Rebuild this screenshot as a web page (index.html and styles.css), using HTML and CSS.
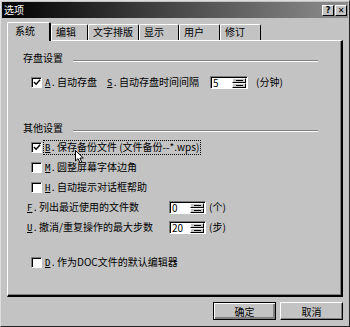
FILE: index.html
```html
<!DOCTYPE html>
<html lang="zh-CN">
<head>
    <meta charset="UTF-8">
    <title>选项</title>
    <link rel="stylesheet" href="styles.css">
</head>
<body>
    <div class="dialog">
        <div class="titlebar">
            <span class="title">选项</span>
            <div class="title-btns">
                <span class="tbtn">?</span>
                <span class="tbtn">✕</span>
            </div>
        </div>

        <div class="tabs">
            <div class="tab active">系统</div>
            <div class="tab">编辑</div>
            <div class="tab">文字排版</div>
            <div class="tab">显示</div>
            <div class="tab">用户</div>
            <div class="tab">修订</div>
        </div>

        <div class="panel">
            <!-- 存盘设置 -->
            <div class="group-head">
                <span>存盘设置</span>
                <i class="rule"></i>
            </div>
            <div class="row row-save">
                <span class="check on"><svg width="9" height="9" viewBox="0 0 9 9"><path d="M1 4 L3.5 6.5 L8 1.5" fill="none" stroke="#000" stroke-width="1.6"/></svg></span>
                <span class="label"><span class="key"><u>A</u>.</span>自动存盘</span>
                <span class="label label-gap"><span class="key"><u>S</u>.</span>自动存盘时间间隔</span>
                <span class="spin spin-wide">
                    <span class="spin-val">5</span>
                    <span class="spin-btns"><b class="arrow up"></b><b class="arrow down"></b></span>
                </span>
                <span class="unit unit-wide">(分钟)</span>
            </div>

            <!-- 其他设置 -->
            <div class="group-head group-other">
                <span>其他设置</span>
                <i class="rule"></i>
            </div>
            <div class="row row-first">
                <span class="check on"><svg width="9" height="9" viewBox="0 0 9 9"><path d="M1 4 L3.5 6.5 L8 1.5" fill="none" stroke="#000" stroke-width="1.6"/></svg></span>
                <span class="label focus"><span class="key"><u>B</u>.</span>保存备份文件 (文件备份--*.wps)</span>
            </div>
            <div class="row">
                <span class="check"></span>
                <span class="label"><span class="key"><u>M</u>.</span>圆整屏幕字体边角</span>
            </div>
            <div class="row">
                <span class="check"></span>
                <span class="label"><span class="key"><u>H</u>.</span>自动提示对话框帮助</span>
            </div>
            <div class="row row-field">
                <span class="field-label"><span class="key"><u>F</u>.</span>列出最近使用的文件数</span>
                <span class="spin">
                    <span class="spin-val">0</span>
                    <span class="spin-btns"><b class="arrow up"></b><b class="arrow down"></b></span>
                </span>
                <span class="unit">(个)</span>
            </div>
            <div class="row row-field">
                <span class="field-label"><span class="key"><u>U</u>.</span>撤消/重复操作的最大步数</span>
                <span class="spin">
                    <span class="spin-val">20</span>
                    <span class="spin-btns"><b class="arrow up"></b><b class="arrow down"></b></span>
                </span>
                <span class="unit">(步)</span>
            </div>
            <div class="row row-last">
                <span class="check"></span>
                <span class="label"><span class="key"><u>D</u>.</span>作为DOC文件的默认编辑器</span>
            </div>
        </div>

        <div class="footer">
            <button class="btn btn-default">确定</button>
            <button class="btn">取消</button>
        </div>

        <!-- mouse pointer over the backup option -->
        <svg class="cursor" width="10" height="14" viewBox="0 0 10 14">
            <path d="M0.5 0.5 L0.5 11 L3 8.6 L5 12.8 L6.8 12 L4.9 8 L8.3 8 Z" fill="#fff" stroke="#000" stroke-width="1"/>
        </svg>
    </div>
</body>
</html>
```

FILE: styles.css
```css
:root {
    --face: #c3c3c3;
    --shadow: #808080;
    --light: #ffffff;
    --dark: #000000;
}

* {
    box-sizing: border-box;
    margin: 0;
    padding: 0;
}

body {
    width: 350px;
    height: 327px;
    background: var(--face);
    font-family: "Noto Sans CJK SC", "DejaVu Sans", sans-serif;
    font-size: 10px;
    line-height: 12px;
    color: #000;
}

/* Dialog frame */
.dialog {
    position: relative;
    width: 350px;
    height: 327px;
    border: 1px solid;
    border-color: #dedede #222 #222 #dedede;
    padding: 1px;
    display: flex;
    flex-direction: column;
}

.titlebar {
    height: 16px;
    background: linear-gradient(to right, #000 0%, #3a3a3a 40%, #8e8e8e 100%);
    color: #fff;
    display: flex;
    align-items: center;
    justify-content: space-between;
    padding: 0 1px 0 2px;
}

.title {
    font-size: 10px;
}

.title-btns {
    display: flex;
    gap: 1px;
}

.tbtn {
    width: 12px;
    height: 11px;
    background: var(--face);
    color: #000;
    border: 1px solid;
    border-color: var(--light) var(--dark) var(--dark) var(--light);
    font-family: "DejaVu Sans", sans-serif;
    font-weight: bold;
    font-size: 8px;
    line-height: 9px;
    text-align: center;
}

/* Tabs */
.tabs {
    display: flex;
    align-items: flex-end;
    height: 18px;
    margin: 4px 5px 0;
}

.tab {
    height: 16px;
    padding-left: 4px;
    border-top: 1px solid var(--light);
    border-left: 1px solid var(--light);
    border-right: 1px solid var(--dark);
    border-radius: 2px 2px 0 0;
    line-height: 14px;
}

.tab:nth-child(2) { width: 37px; }
.tab:nth-child(3) { width: 51px; }
.tab:nth-child(4) { width: 40px; }
.tab:nth-child(5) { width: 41px; }
.tab:nth-child(6) { width: 41px; }

.tab.active {
    width: 44px;
    height: 19px;
    margin-bottom: -1px;
    padding-left: 7px;
    background: var(--face);
    border-right: 2px solid var(--dark);
    position: relative;
    z-index: 1;
    line-height: 16px;
}

/* Panel */
.panel {
    height: 257px;
    margin: 0 5px;
    border-top: 1px solid var(--light);
    border-left: 1px solid var(--light);
    border-right: 2px solid var(--dark);
    border-bottom: 2px solid var(--dark);
    box-shadow: inset -1px -1px 0 var(--shadow);
    padding: 10px 23px 0 15px;
}

.group-head {
    display: flex;
    align-items: center;
    gap: 10px;
    height: 14px;
}

.group-other {
    margin-top: 29px;
}

.rule {
    flex: 1;
    height: 2px;
    margin-top: 6px;
    border-top: 1px solid var(--shadow);
    border-bottom: 1px solid var(--light);
}

.row {
    display: flex;
    align-items: center;
    height: 20px;
    padding-left: 8px;
    white-space: nowrap;
}

.row-save {
    margin-top: 7px;
}

.row-first {
    margin-top: 2px;
}

.row-last {
    margin-top: 15px;
}

.row-field {
    padding-left: 4px;
}

.check {
    width: 11px;
    height: 11px;
    background: #fff;
    border: 1px solid;
    border-color: var(--shadow) var(--light) var(--light) var(--shadow);
    box-shadow: inset 1px 1px 0 var(--dark);
    display: flex;
    align-items: center;
    justify-content: center;
    flex: none;
}

.check svg {
    margin: 1px 0 0 1px;
}

.label {
    margin-left: 2px;
    padding: 0 1px;
}

.label-gap {
    margin-left: 8px;
}

.focus {
    outline: 1px dotted #000;
    outline-offset: 0;
}

.key {
    display: inline-block;
    width: 12px;
    font-family: "DejaVu Sans Mono", monospace;
    font-size: 9px;
}

.field-label {
    width: 142px;
}

/* Spin boxes */
.spin {
    width: 37px;
    height: 13px;
    background: #fff;
    border: 1px solid;
    border-color: var(--shadow) var(--light) var(--light) var(--shadow);
    box-shadow: inset 1px 1px 0 var(--dark);
    display: flex;
    align-items: stretch;
    flex: none;
}

.spin-wide {
    width: 38px;
    margin-left: 10px;
}

.spin-val {
    flex: 1;
    padding-left: 2px;
    font-size: 10px;
    line-height: 11px;
}

.spin-btns {
    width: 15px;
    display: flex;
    flex-direction: column;
    padding: 1px 1px 0 0;
}

.arrow {
    flex: 1;
    background: var(--face);
    border: 1px solid;
    border-color: var(--light) var(--dark) var(--dark) var(--light);
    position: relative;
}

.arrow::after {
    content: "";
    display: block;
    width: 7px;
    margin: 1px auto 0;
    border-top: 1px solid var(--dark);
}

.unit {
    margin-left: 3px;
}

.unit-wide {
    margin-left: 8px;
}

/* Buttons */
.footer {
    display: flex;
    justify-content: flex-end;
    gap: 4px;
    margin-top: 5px;
    padding-right: 5px;
}

.btn {
    width: 63px;
    height: 18px;
    background: var(--face);
    border: 1px solid;
    border-color: var(--light) var(--dark) var(--dark) var(--light);
    box-shadow: inset -1px -1px 0 var(--shadow);
    font-family: "Noto Sans CJK SC", sans-serif;
    font-size: 10px;
    color: #000;
}

.btn-default {
    border: 1px solid var(--dark);
    box-shadow: inset 1px 1px 0 var(--light), inset -2px -2px 0 var(--shadow);
}

.cursor {
    position: absolute;
    left: 74px;
    top: 149px;
}
```
